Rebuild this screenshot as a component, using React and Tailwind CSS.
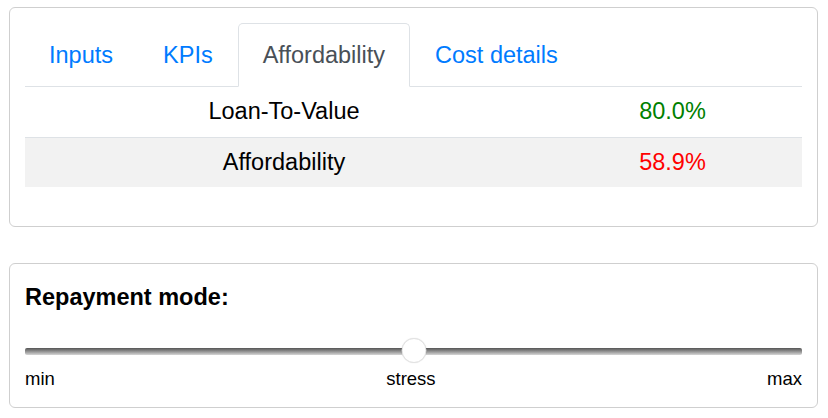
import { useState } from 'react'

const TABS = ['Inputs', 'KPIs', 'Affordability', 'Cost details']

const LIGNES = [
  { label: 'Loan-To-Value', valeur: '80.0%', couleur: 'text-[#008000]' },
  { label: 'Affordability', valeur: '58.9%', couleur: 'text-[#ff0000]' },
]

function Onglets({ actif, setActif }) {
  return (
    <div className="flex border-b border-[#dee2e6]">
      {TABS.map((t, i) => (
        <button
          key={t}
          type="button"
          onClick={() => setActif(t)}
          className={
            (i === 0 ? '-ml-px ' : '') +
            (t === actif
              ? '-mb-px px-6 py-[13px] leading-9 text-[#495057] bg-white border border-[#dee2e6] border-b-white rounded-t-[5px]'
              : '-mb-px px-6 py-[13px] leading-9 text-[#007bff] border border-transparent')
          }
        >
          {t}
        </button>
      ))}
    </div>
  )
}

export default function App() {
  const [actif, setActif] = useState('Affordability')

  return (
    <div
      className="w-[828px] h-[418px] bg-white pt-[7px] pl-[9px] pr-[10px] text-[23.5px] text-black"
      style={{ fontFamily: '"Liberation Sans", Arial, sans-serif' }}
    >
      {/* Carte onglets */}
      <div className="border border-[#cfcfcf] rounded-[6px] px-[15px] pt-[15px] pb-[39px]">
        <Onglets actif={actif} setActif={setActif} />
        <div>
          {LIGNES.map((l, i) => (
            <div
              key={l.label}
              className={`grid grid-cols-[2fr_1fr] h-[50px] items-center ${i > 0 ? 'border-t border-[#dee2e6] bg-[#f2f2f2]' : ''}`}
            >
              <div className="text-center">{l.label}</div>
              <div className={`text-center ${l.couleur}`}>{l.valeur}</div>
            </div>
          ))}
        </div>
      </div>

      {/* Carte slider */}
      <div className="mt-[36px] border border-[#cfcfcf] rounded-[6px] px-[15px] pt-[15px] pb-[14px]">
        <div className="font-bold leading-9">Repayment mode:</div>
        <div className="relative mt-[23px] h-[26px]">
          <div className="absolute left-0 right-0 top-[10px] h-[7px] rounded-[2px] bg-linear-to-b from-[#555555] to-[#d6d6d6]" />
          <div className="absolute top-0 left-1/2 -translate-x-1/2 w-[25px] h-[25px] rounded-full bg-white border border-[#e2e2e2] shadow-[0_0_1px_rgba(0,0,0,0.15)]" />
        </div>
        <div className="mt-[1px] flex justify-between text-[18.5px] leading-7">
          <span>min</span>
          <span>stress</span>
          <span>max</span>
        </div>
      </div>
    </div>
  )
}
